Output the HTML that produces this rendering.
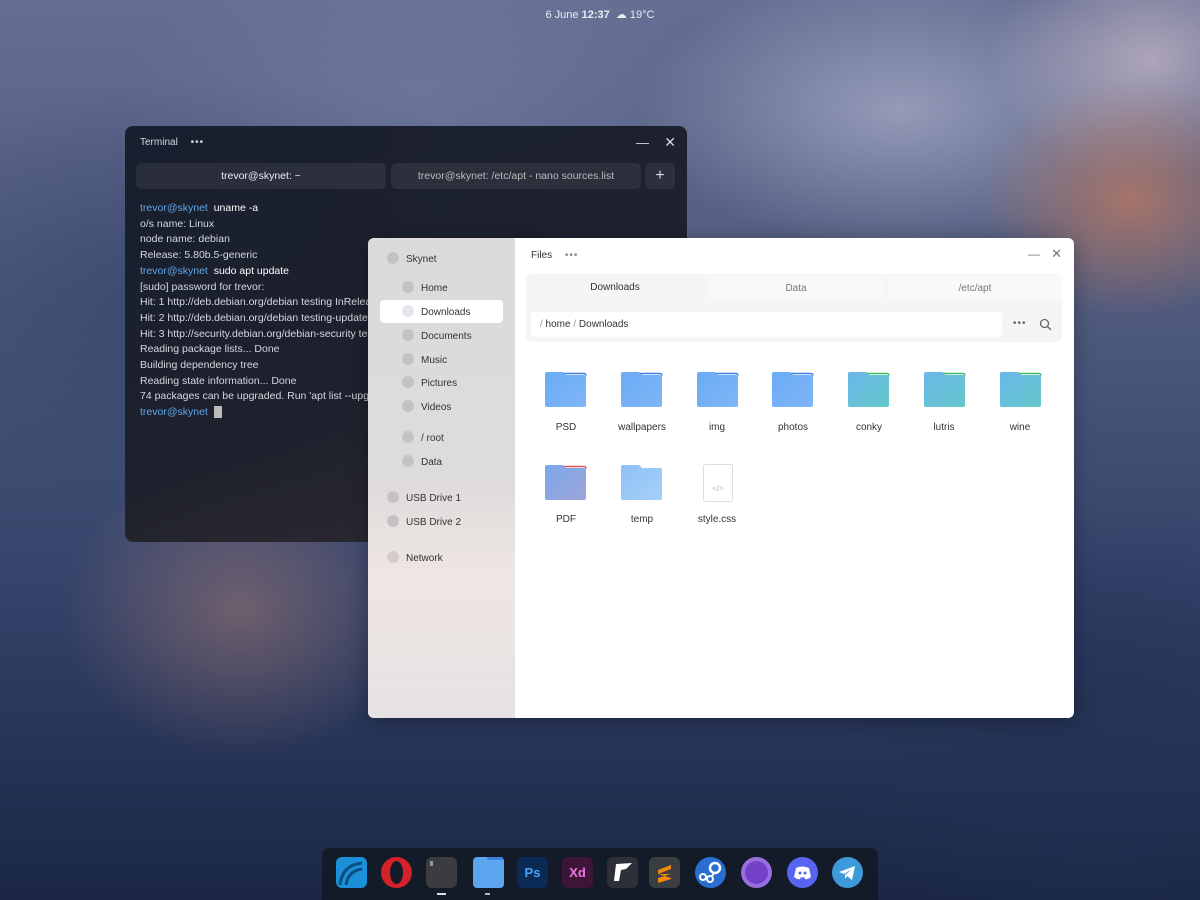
<!DOCTYPE html>
<html><head><meta charset="utf-8"><style>
*{margin:0;padding:0;box-sizing:border-box}
body{width:1200px;height:900px;overflow:hidden;position:relative;font-family:"Liberation Sans","DejaVu Sans",sans-serif;
background:
radial-gradient(ellipse 150px 120px at 1130px 200px,rgba(200,125,95,.7),transparent),
radial-gradient(ellipse 160px 120px at 1150px 60px,rgba(225,205,215,.6),transparent),
radial-gradient(ellipse 180px 150px at 240px 610px,rgba(200,140,120,.4),transparent),
radial-gradient(ellipse 260px 140px at 900px 110px,rgba(185,190,215,.6),transparent),
radial-gradient(ellipse 300px 160px at 420px 90px,rgba(120,130,165,.5),transparent),
radial-gradient(ellipse 300px 220px at 1100px 720px,rgba(35,50,85,.8),transparent),
radial-gradient(ellipse 400px 220px at 200px 300px,rgba(50,65,105,.7),transparent),
linear-gradient(180deg,#656e92 0%,#525d80 30%,#34436a 65%,#1a2644 100%);}
.a{position:absolute}
.top{left:0;width:1200px;top:8px;text-align:center;color:#e8ecf4;font-size:11px}
.term{left:125px;top:126px;width:562px;height:416px;border-radius:8px;background:linear-gradient(160deg,rgba(22,28,42,.96),rgba(28,30,40,.93) 60%,rgba(48,42,44,.9));color:#d4d8e0;font-size:10.5px}
.tab{position:absolute;top:37px;height:26px;border-radius:5px;background:rgba(255,255,255,.07);text-align:center;line-height:26px;font-size:10.5px}
.tl{position:absolute;left:15px;top:75px;line-height:15.7px}
.p{color:#5fa6e8}
.files{left:368px;top:238px;width:706px;height:480px;border-radius:6px;overflow:hidden;background:#fff;box-shadow:0 4px 20px rgba(0,0,0,.3)}
.side{position:absolute;left:0;top:0;width:147px;height:480px;background:linear-gradient(180deg,#dcdadc 0%,#dedbdc 50%,#eee6e2 70%,#e6e2e4 100%)}
.si{position:absolute;font-size:10px;color:#333;line-height:14px;margin-top:2px}
.dot{position:absolute;width:12px;height:12px;border-radius:50%;background:#c4c2c4}
.ft{position:absolute;font-size:10px;color:#333;text-align:center;line-height:14px}
.ic{position:absolute;top:857px;width:31px;height:31px;border-radius:6px}
.dock{left:322px;top:848px;width:556px;height:52px;border-radius:7px 7px 0 0;background:#141b28}
</style></head><body>
<div class="a top">6 June <b>12:37</b> &nbsp;☁ 19°C</div>

<div class="a term">
 <div class="a" style="left:15px;top:11px;font-size:10px">Terminal <span style="margin-left:10px;letter-spacing:1px">•••</span></div>
 <div class="a" style="right:38px;top:9px;font-size:13px">—</div>
 <div class="a" style="right:11px;top:8px;font-size:14px">✕</div>
 <div class="tab" style="left:11px;width:250px;color:#eee">trevor@skynet: ~</div>
 <div class="tab" style="left:266px;width:250px;color:#bbb">trevor@skynet: /etc/apt - nano sources.list</div>
 <div class="tab" style="left:520px;width:30px;font-size:16px">+</div>
 <div class="tl"><span class="p">trevor@skynet</span>&nbsp; <span style="color:#fff">uname -a</span><br>o/s name: Linux<br>node name: debian<br>Release: 5.80b.5-generic<br><span class="p">trevor@skynet</span>&nbsp; <span style="color:#fff">sudo apt update</span><br>[sudo] password for trevor:<br>Hit: 1 http://deb.debian.org/debian testing InRelease<br>Hit: 2 http://deb.debian.org/debian testing-updates<br>Hit: 3 http://security.debian.org/debian-security testing<br>Reading package lists... Done<br>Building dependency tree<br>Reading state information... Done<br>74 packages can be upgraded. Run 'apt list --upgradable'<br><span class="p">trevor@skynet</span>&nbsp; <span style="display:inline-block;width:8px;height:12px;background:#bbb;vertical-align:middle"></span></div>
</div>

<div class="a files">
 <div class="side">
  <div class="dot" style="left:19px;top:14px"></div><div class="si" style="left:38px;top:13px">Skynet</div>
  <div style="position:absolute;left:12px;top:62px;width:123px;height:23px;border-radius:4px;background:#fff"></div>
  <div class="dot" style="left:34px;top:43px"></div><div class="si" style="left:53px;top:42px">Home</div>
  <div class="dot" style="left:34px;top:67px;background:#e4e6ee"></div><div class="si" style="left:53px;top:66px">Downloads</div>
  <div class="dot" style="left:34px;top:91px"></div><div class="si" style="left:53px;top:90px">Documents</div>
  <div class="dot" style="left:34px;top:115px"></div><div class="si" style="left:53px;top:114px">Music</div>
  <div class="dot" style="left:34px;top:138px"></div><div class="si" style="left:53px;top:137px">Pictures</div>
  <div class="dot" style="left:34px;top:162px"></div><div class="si" style="left:53px;top:161px">Videos</div>
  <div class="dot" style="left:34px;top:193px"></div><div class="si" style="left:53px;top:192px">/ root</div>
  <div class="dot" style="left:34px;top:217px"></div><div class="si" style="left:53px;top:216px">Data</div>
  <div class="dot" style="left:19px;top:253px"></div><div class="si" style="left:38px;top:252px">USB Drive 1</div>
  <div class="dot" style="left:19px;top:277px"></div><div class="si" style="left:38px;top:276px">USB Drive 2</div>
  <div class="dot" style="left:19px;top:313px;background:#d6cccc"></div><div class="si" style="left:38px;top:312px">Network</div>
 </div>
 <div class="ft" style="left:163px;top:11px">Files <span style="margin-left:10px;letter-spacing:1px;color:#888">•••</span></div>
 <div class="a" style="right:34px;top:9px;font-size:12px;color:#777">—</div>
 <div class="a" style="right:12px;top:8px;font-size:13px;color:#777">✕</div>
 <div style="position:absolute;left:158px;top:36px;width:536px;height:68px;border-radius:5px;background:#f5f5f6"></div>
 <div class="ft" style="left:158px;top:36px;width:178px;height:29px;line-height:28px;background:#f5f5f6;border-radius:5px">Downloads</div>
 <div class="ft" style="left:341px;top:37px;width:174px;height:26px;line-height:28px;background:#f9f9f9;border-radius:5px;color:#777">Data</div>
 <div class="ft" style="left:520px;top:37px;width:174px;height:26px;line-height:28px;background:#f9f9f9;border-radius:5px;color:#777">/etc/apt</div>
 <div style="position:absolute;left:163px;top:74px;width:471px;height:25px;border-radius:4px;background:#fff"></div>
 <div class="ft" style="left:172px;top:80px;text-align:left"><span style="color:#999">/</span> home <span style="color:#999">/</span> Downloads</div>
 <div class="ft" style="left:645px;top:79px;letter-spacing:1px;color:#666">•••</div>
 <svg style="position:absolute;left:671px;top:80px" width="13" height="13" viewBox="0 0 13 13"><circle cx="5.5" cy="5.5" r="4" fill="none" stroke="#666" stroke-width="1.3"/><path d="M8.5 8.5L12 12" stroke="#666" stroke-width="1.3"/></svg>
</div>
<svg class="a" style="left:0;top:0" width="1200" height="900">
<defs>
<linearGradient id="gb" x1="0" y1="0" x2="1" y2="1"><stop offset="0" stop-color="#6aabf5"/><stop offset="1" stop-color="#7fb6f6"/></linearGradient>
<linearGradient id="gg" x1="0" y1="0" x2="1" y2="1"><stop offset="0" stop-color="#6cb7ec"/><stop offset="1" stop-color="#63c8c8"/></linearGradient>
<linearGradient id="gp" x1="0" y1="0" x2="1" y2="1"><stop offset="0" stop-color="#78a8ec"/><stop offset="1" stop-color="#a0a4d8"/></linearGradient>
<linearGradient id="gt" x1="0" y1="0" x2="1" y2="1"><stop offset="0" stop-color="#8ec0f6"/><stop offset="1" stop-color="#a6d0f8"/></linearGradient>
</defs>
<g>
<g transform="translate(545,372)"><path d="M0 2a2 2 0 0 1 2-2h16l3 3h18a2 2 0 0 1 2 2v28a2 2 0 0 1-2 2h-37a2 2 0 0 1-2-2z" fill="url(#gb)"/><path d="M19 1.5h20a2 2 0 0 1 2 2" stroke="#3d7fe0" stroke-width="1.5" fill="none"/></g>
<g transform="translate(621,372)"><path d="M0 2a2 2 0 0 1 2-2h16l3 3h18a2 2 0 0 1 2 2v28a2 2 0 0 1-2 2h-37a2 2 0 0 1-2-2z" fill="url(#gb)"/><path d="M19 1.5h20a2 2 0 0 1 2 2" stroke="#3d7fe0" stroke-width="1.5" fill="none"/></g>
<g transform="translate(697,372)"><path d="M0 2a2 2 0 0 1 2-2h16l3 3h18a2 2 0 0 1 2 2v28a2 2 0 0 1-2 2h-37a2 2 0 0 1-2-2z" fill="url(#gb)"/><path d="M19 1.5h20a2 2 0 0 1 2 2" stroke="#3d7fe0" stroke-width="1.5" fill="none"/></g>
<g transform="translate(772,372)"><path d="M0 2a2 2 0 0 1 2-2h16l3 3h18a2 2 0 0 1 2 2v28a2 2 0 0 1-2 2h-37a2 2 0 0 1-2-2z" fill="url(#gb)"/><path d="M19 1.5h20a2 2 0 0 1 2 2" stroke="#3d7fe0" stroke-width="1.5" fill="none"/></g>
<g transform="translate(848,372)"><path d="M0 2a2 2 0 0 1 2-2h16l3 3h18a2 2 0 0 1 2 2v28a2 2 0 0 1-2 2h-37a2 2 0 0 1-2-2z" fill="url(#gg)"/><path d="M19 1.5h20a2 2 0 0 1 2 2" stroke="#3cba5c" stroke-width="1.5" fill="none"/></g>
<g transform="translate(924,372)"><path d="M0 2a2 2 0 0 1 2-2h16l3 3h18a2 2 0 0 1 2 2v28a2 2 0 0 1-2 2h-37a2 2 0 0 1-2-2z" fill="url(#gg)"/><path d="M19 1.5h20a2 2 0 0 1 2 2" stroke="#3cba5c" stroke-width="1.5" fill="none"/></g>
<g transform="translate(1000,372)"><path d="M0 2a2 2 0 0 1 2-2h16l3 3h18a2 2 0 0 1 2 2v28a2 2 0 0 1-2 2h-37a2 2 0 0 1-2-2z" fill="url(#gg)"/><path d="M19 1.5h20a2 2 0 0 1 2 2" stroke="#3cba5c" stroke-width="1.5" fill="none"/></g>
<g transform="translate(545,465)"><path d="M0 2a2 2 0 0 1 2-2h16l3 3h18a2 2 0 0 1 2 2v28a2 2 0 0 1-2 2h-37a2 2 0 0 1-2-2z" fill="url(#gp)"/><path d="M19 1.5h20a2 2 0 0 1 2 2" stroke="#e0545c" stroke-width="1.5" fill="none"/></g>
<g transform="translate(621,465)"><path d="M0 2a2 2 0 0 1 2-2h16l3 3h18a2 2 0 0 1 2 2v28a2 2 0 0 1-2 2h-37a2 2 0 0 1-2-2z" fill="url(#gt)"/></g>
<g transform="translate(703,464)"><rect x="0.5" y="0.5" width="29" height="37" rx="2" fill="#fff" stroke="#ddd"/><text x="15" y="27" font-size="8" fill="#bbb" text-anchor="middle" font-family="Liberation Sans">&lt;/&gt;</text></g>
</g>
<g font-family="Liberation Sans" font-size="10" fill="#333" text-anchor="middle">
<text x="566" y="430">PSD</text><text x="642" y="430">wallpapers</text><text x="717" y="430">img</text><text x="793" y="430">photos</text><text x="869" y="430">conky</text><text x="944" y="430">lutris</text><text x="1020" y="430">wine</text>
<text x="566" y="522">PDF</text><text x="642" y="522">temp</text><text x="717" y="522">style.css</text>
</g>
</svg>

<div class="a dock"></div>
<div class="ic" style="left:336px;background:#1b8fd8"><svg width="31" height="31"><path d="M4 28 Q6 8 26 6" stroke="#0b4f80" stroke-width="3" fill="none"/><path d="M10 28 Q12 14 26 12" stroke="#0b4f80" stroke-width="3" fill="none"/></svg></div>
<div class="ic" style="left:381px;border-radius:50%;background:#d3222a"><div style="position:absolute;left:9px;top:4px;width:13px;height:23px;border-radius:50%;background:#141b28"></div></div>
<div class="ic" style="left:426px;background:#3a3c40"><div style="position:absolute;left:4px;top:4px;width:3px;height:5px;background:#999"></div></div>
<div class="a" style="left:437px;top:893px;width:9px;height:2px;background:#ddd"></div>
<div class="ic" style="left:473px;background:#5ba4ee;border-radius:4px"><div style="position:absolute;left:14px;top:0;width:16px;height:3px;background:#3d7fe0;border-radius:2px"></div></div>
<div class="a" style="left:485px;top:893px;width:5px;height:2px;background:#bbb"></div>
<div class="ic" style="left:517px;background:#0b2a55;color:#4aa2f2;font:bold 13px 'Liberation Sans';text-align:center;line-height:31px">Ps</div>
<div class="ic" style="left:562px;background:#3c1538;color:#f275e4;font:bold 13px 'Liberation Sans';text-align:center;line-height:31px">Xd</div>
<div class="ic" style="left:607px;background:#2d3038"><svg width="31" height="31"><path d="M7 24 L9 7 L25 6 L19 12 L14 13 L12 24z" fill="#fff"/></svg></div>
<div class="ic" style="left:649px;background:#3a3d42"><svg width="31" height="31"><path d="M9 13 L22 8 L22 12 L9 17z M9 17 L22 21 L22 17z M9 21 L22 17 L22 22 L9 26z" fill="#f08c0a"/></svg></div>
<div class="ic" style="left:695px;border-radius:50%;background:#2a6ed0"><svg width="31" height="31"><circle cx="20" cy="11" r="5" fill="none" stroke="#fff" stroke-width="2.5"/><circle cx="8" cy="20" r="3" fill="none" stroke="#fff" stroke-width="2"/><circle cx="15" cy="22" r="3" fill="none" stroke="#fff" stroke-width="2"/><path d="M11 20h1M17 19l2-3" stroke="#fff" stroke-width="2"/></svg></div>
<div class="ic" style="left:741px;border-radius:50%;background:#9a6ee0"><div style="position:absolute;left:4px;top:4px;width:23px;height:23px;border-radius:50%;background:#7442c8"></div></div>
<div class="ic" style="left:787px;border-radius:50%;background:#5865f2"><svg width="31" height="31"><path d="M9 11 Q15 8 22 11 L24 20 Q20 23 18 22 L17 20 Q15 21 14 20 L13 22 Q11 23 7 20z" fill="#fff"/><circle cx="13" cy="16" r="1.5" fill="#5865f2"/><circle cx="18" cy="16" r="1.5" fill="#5865f2"/></svg></div>
<div class="ic" style="left:832px;border-radius:50%;background:#3d9ad8"><svg width="31" height="31"><path d="M7 15 L23 9 L20 23 L15 19 L13 22 L13 18 L20 12 L12 17z" fill="#fff"/></svg></div>
</body></html>
